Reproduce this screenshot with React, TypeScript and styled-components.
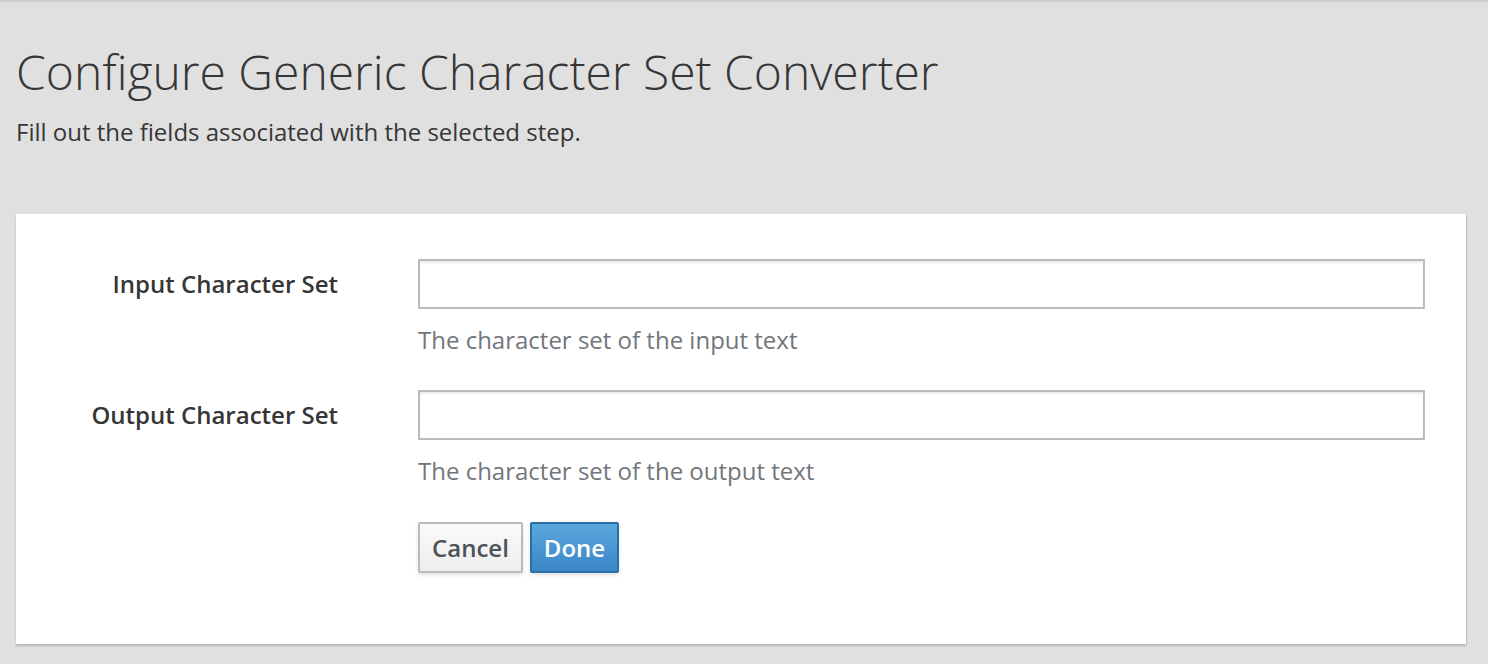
import React from "react";
import styled, { createGlobalStyle } from "styled-components";

const Global = createGlobalStyle`
  html, body { margin: 0; padding: 0; }
  body {
    background: #e0e0e0;
    font-family: "Open Sans", "Noto Sans", sans-serif;
    color: #363636;
  }
`;

const Page = styled.div`
  min-height: 664px;
  box-sizing: border-box;
  border-top: 2px solid #cdcdcd;
  padding: 0 22px 0 16px;
`;

const Header = styled.div`
  padding: 0;
`;

const Title = styled.h1`
  margin: 0;
  padding-top: 38px;
  font-size: 48px;
  font-weight: 300;
  line-height: 64px;
  color: #363636;
`;

const Subtitle = styled.p`
  margin: 12px 0 0;
  font-size: 24px;
  line-height: 32px;
  color: #363636;
`;

const Card = styled.div`
  margin-top: 66px;
  background: #fff;
  box-shadow: 0 2px 2px rgba(0, 0, 0, 0.18), 1px 0 1px rgba(0, 0, 0, 0.08);
  padding: 45px 41px 71px 0;
`;

const Form = styled.div`
  display: grid;
  grid-template-columns: 322px 1fr;
  column-gap: 80px;
  row-gap: 33px;
`;

const Label = styled.label`
  text-align: right;
  font-size: 24px;
  font-weight: 600;
  line-height: 50px;
  color: #363636;
`;

const Field = styled.div`
  display: flex;
  flex-direction: column;
`;

const Input = styled.input`
  box-sizing: border-box;
  height: 50px;
  width: 100%;
  border: 2px solid #bbb;
  border-radius: 1px;
  box-shadow: inset 0 2px 2px rgba(3, 3, 3, 0.08);
  font: inherit;
  font-size: 24px;
  padding: 0 12px;
  outline: none;
`;

const Help = styled.div`
  margin-top: 14px;
  font-size: 24px;
  line-height: 34px;
  color: #72767b;
`;

const Buttons = styled.div`
  display: flex;
  gap: 7px;
  margin-top: 1px;
`;

const Button = styled.button<{ $primary?: boolean }>`
  box-sizing: border-box;
  height: 51px;
  padding: 0 12px;
  font-family: inherit;
  font-size: 24px;
  font-weight: 600;
  border-radius: 2px;
  border: 2px solid ${(p) => (p.$primary ? "#2b6ea6" : "#bbb")};
  background: ${(p) =>
    p.$primary
      ? "linear-gradient(to bottom, #5aa8dd 0%, #3a86c8 100%)"
      : "linear-gradient(to bottom, #fafafa 0%, #ededed 100%)"};
  color: ${(p) => (p.$primary ? "#fff" : "#4d5258")};
  box-shadow: 0 2px 4px rgba(0, 0, 0, 0.12);
`;

const Spacer = styled.div``;

export default function App() {
  return (
    <>
      <Global />
      <Page>
        <Header>
          <Title>Configure Generic Character Set Converter</Title>
          <Subtitle>Fill out the fields associated with the selected step.</Subtitle>
        </Header>
        <Card>
          <Form>
            <Label>Input Character Set</Label>
            <Field>
              <Input />
              <Help>The character set of the input text</Help>
            </Field>
            <Label>Output Character Set</Label>
            <Field>
              <Input />
              <Help>The character set of the output text</Help>
            </Field>
            <Spacer />
            <Buttons>
              <Button>Cancel</Button>
              <Button $primary>Done</Button>
            </Buttons>
          </Form>
        </Card>
      </Page>
    </>
  );
}
